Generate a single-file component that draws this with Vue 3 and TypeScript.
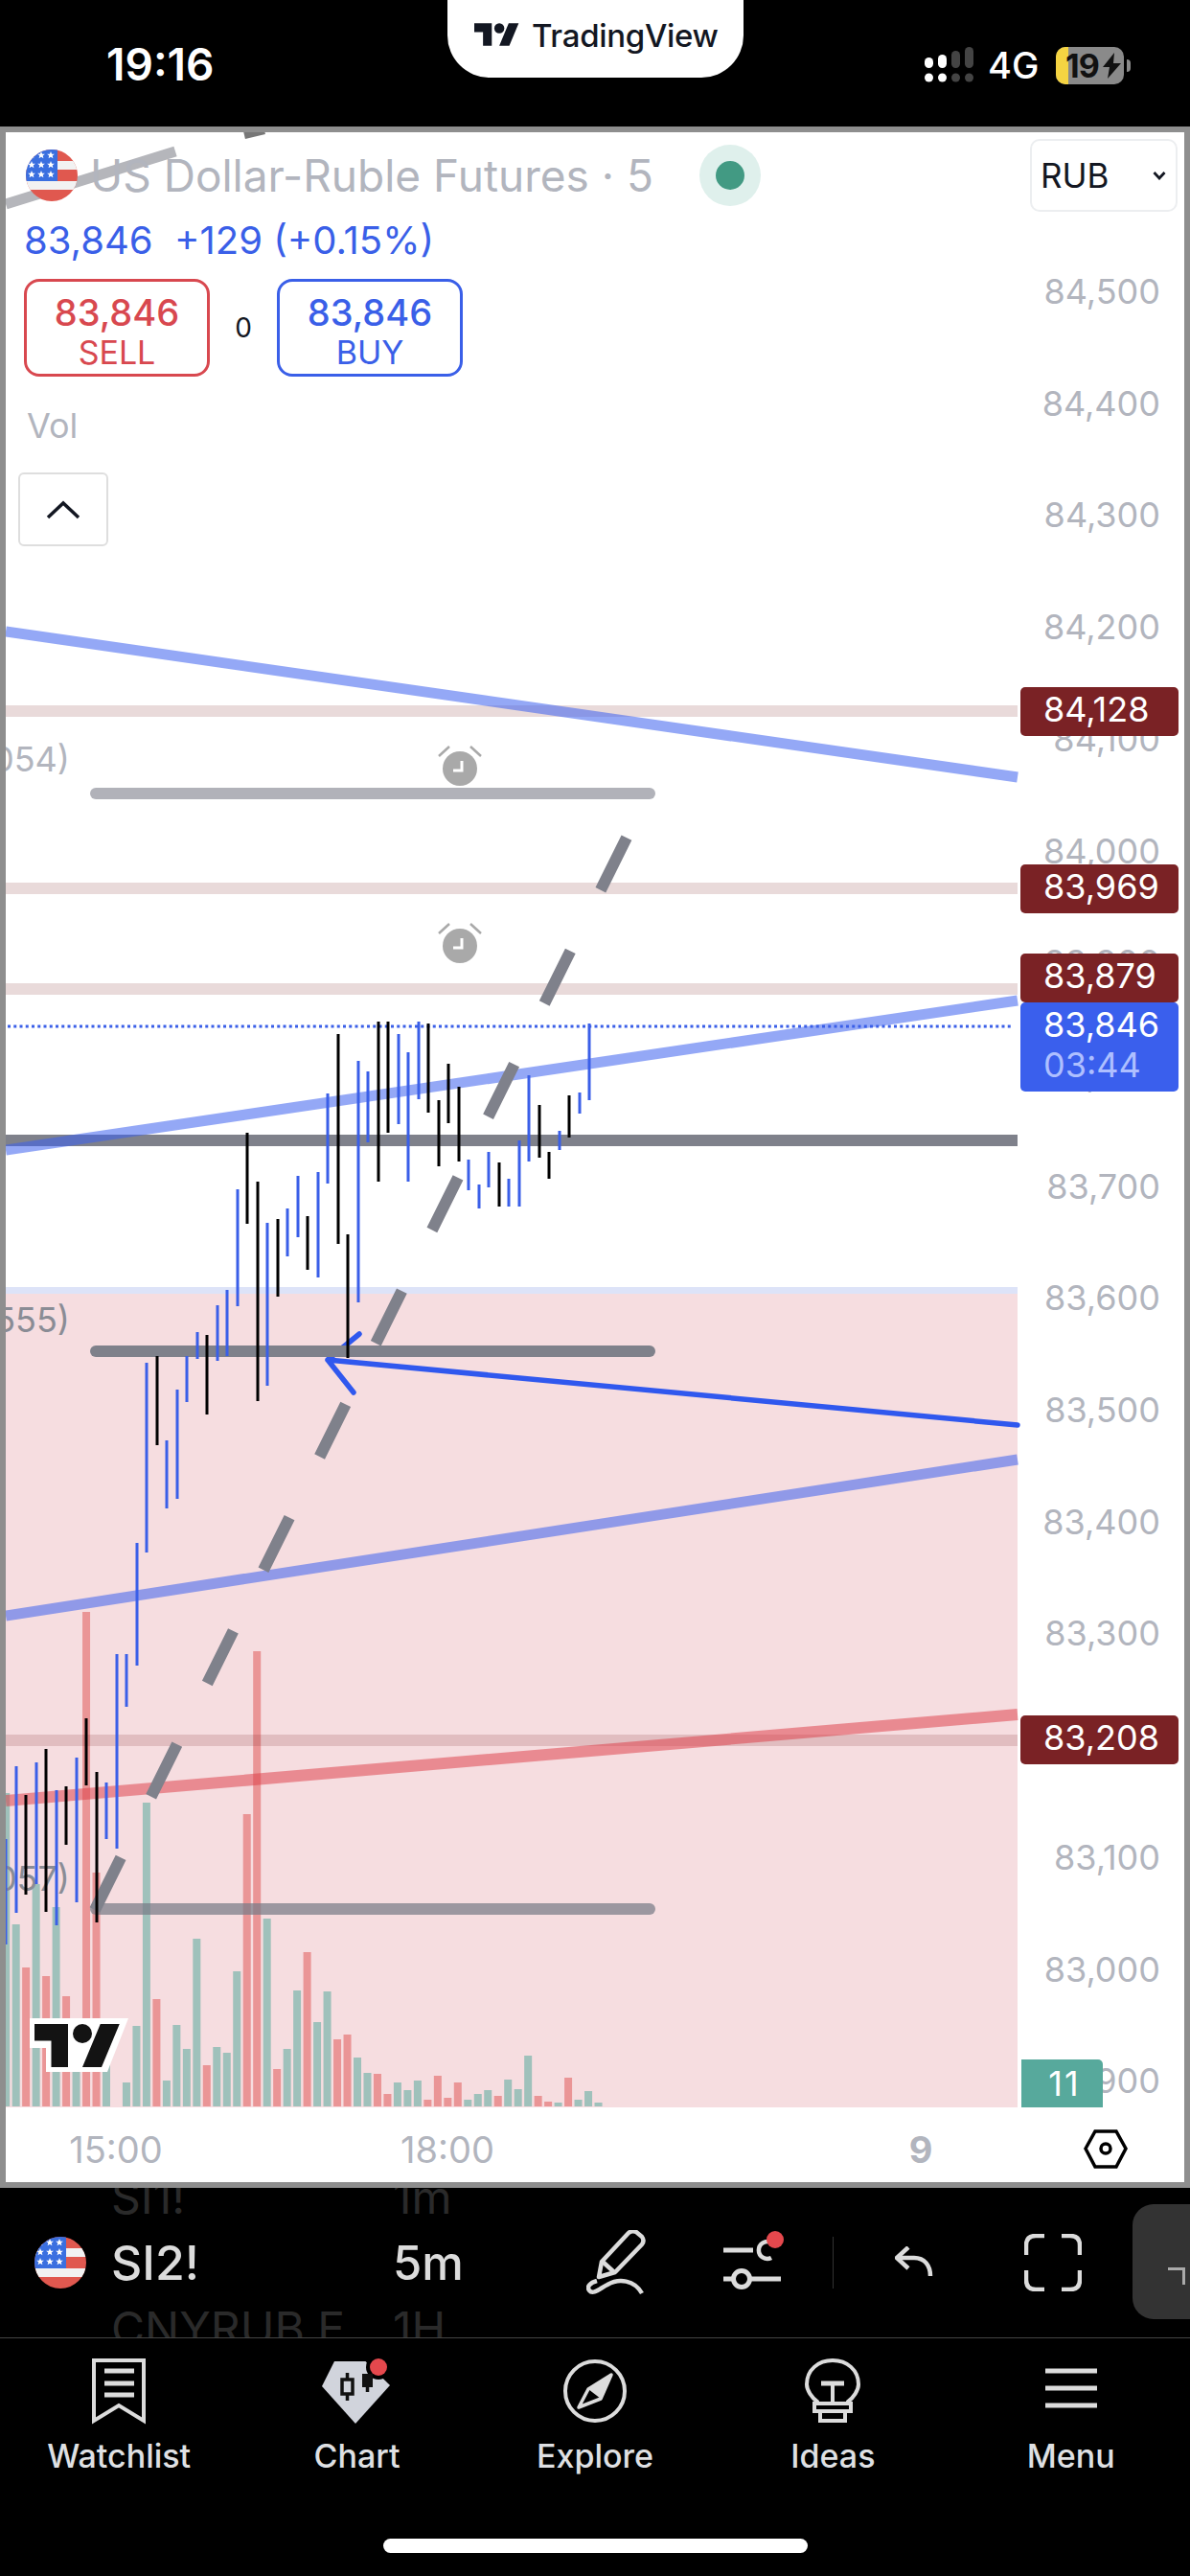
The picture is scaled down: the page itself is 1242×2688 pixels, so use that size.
<template>
  <div class="screen">
    <header class="status">
      <span class="clock">19:16</span>
      <div class="pill">
        <svg class="pill-logo" viewBox="0 0 36 18">
          <path d="M14 18H7V7H0V0h14v18zM28 18h-8l7.5-18h8L28 18z" fill="#131722" />
          <circle cx="20" cy="4" r="4" fill="#131722" />
        </svg>
        <span class="pill-text">TradingView</span>
      </div>
      <div class="status-right">
        <svg class="signal" width="52" height="40" viewBox="0 0 52 40">
          <rect x="0" y="12" width="9" height="11" rx="4.5" fill="#fff" />
          <rect x="14" y="9" width="9" height="14" rx="4.5" fill="#fff" />
          <rect x="28" y="5" width="9" height="18" rx="4.5" fill="#444" />
          <rect x="42" y="1" width="9" height="22" rx="4.5" fill="#444" />
          <circle cx="4.5" cy="33" r="4.5" fill="#fff" />
          <circle cx="18.5" cy="33" r="4.5" fill="#fff" />
          <circle cx="32.5" cy="33" r="4.5" fill="#444" />
          <circle cx="46.5" cy="33" r="4.5" fill="#444" />
        </svg>
        <span class="net">4G</span>
        <div class="battery">
          <div class="battery-fill"></div>
          <span class="battery-num">19</span>
          <svg class="bolt" width="21" height="27" viewBox="0 0 21 27">
            <path d="M13 0L1 15h7l-2 12L20 11h-8z" fill="#111" />
          </svg>
          <div class="battery-cap"></div>
        </div>
      </div>
    </header>

    <main class="chart">
      <svg class="plot" viewBox="6 138 1230 2139" width="1230" height="2139">
        <!-- price zone + volume -->
        <rect x="6" y="1343" width="1056" height="7" fill="#dde3f8" />
        <rect x="6" y="1350" width="1056" height="849" fill="#f6dde0" />
        <rect
          v-for="(v, i) in volumes"
          :key="'v' + i"
          :x="6.2 + i * 10.48 - 4"
          :y="v.top"
          width="8"
          :height="2198 - v.top"
          :fill="v.up ? '#57a99c' : '#e05a5a'"
          opacity="0.55"
        />

        <!-- horizontal alert levels -->
        <rect v-for="y in levelLines" :key="'l' + y" x="6" :y="y - 6" width="1056" height="12" fill="#7a2225" opacity="0.17" />

        <!-- arrow drawing goes under the grey lines -->
        <path d="M375 1392L342 1419L369 1453M342 1419L1062 1487" fill="none" stroke="#3058ee" stroke-width="5.5" stroke-linecap="round" stroke-linejoin="round" />

        <rect x="6" y="1184" width="1056" height="12" fill="#7f818b" />
        <rect x="94" y="822" width="590" height="12" rx="6" fill="#787b86" opacity="0.58" />
        <rect x="94" y="1404" width="590" height="12" rx="6" fill="#7f818b" />
        <rect x="94" y="1986" width="590" height="12" rx="6" fill="#787b86" opacity="0.72" />

        <!-- trend lines -->
        <g stroke-width="11" opacity="0.55">
          <line x1="6" y1="659" x2="1062" y2="811" stroke="#3d62f0" />
          <line x1="6" y1="1200" x2="1062" y2="1044" stroke="#3d62f0" />
          <line x1="6" y1="1686" x2="1062" y2="1523" stroke="#3d62f0" />
        </g>
        <line x1="6" y1="1879" x2="1062" y2="1789" stroke="#de3a44" stroke-width="12" opacity="0.5" />

        <line x1="99" y1="1993" x2="654" y2="874" stroke="#7f818b" stroke-width="12" stroke-dasharray="61 71" />
        <path d="M6 213L183 158" stroke="#b5b6bb" stroke-width="11" />
        <path d="M255 141L276 136" stroke="#777" stroke-width="8" />

        <g v-for="y in alertRows" :key="'a' + y" :transform="`translate(480 ${y})`">
          <circle r="18" fill="#a9a9a9" />
          <path d="M2 -8V2H-7" fill="none" stroke="#fff" stroke-width="3" />
          <path d="M-11 -23L-22 -13M11 -23L22 -13" stroke="#a9a9a9" stroke-width="2.5" />
        </g>

        <text class="ghost-label" x="73" y="792">054)</text>
        <text class="ghost-label dark" x="73" y="1377">555)</text>
        <text class="ghost-label dark" x="73" y="1960">057)</text>

        <line x1="8" y1="1071" x2="1058" y2="1071" stroke="#3a5fe8" stroke-width="3" stroke-dasharray="3 3.25" />

        <!-- bars -->
        <rect
          v-for="(c, i) in candles"
          :key="'c' + i"
          :x="Math.round(6 + i * 10.5) - 1.5"
          :y="c[0]"
          width="3"
          :height="c[1] - c[0]"
          :fill="c[2] === 'k' ? '#000' : '#3a5fe8'"
        />

        <!-- watermark -->
        <polygon points="31,2106 134,2106 112,2162 48,2162 48,2137 31,2137" fill="#fff" />
        <g transform="translate(36 2112) scale(2.5)">
          <path d="M14 18H7V7H0V0h14v18zM28 18h-8l7.5-18h8L28 18z" fill="#131313" />
          <circle cx="20" cy="4" r="4" fill="#131313" />
        </g>

        <!-- price axis -->
        <text v-for="(p, i) in axisPrices" :key="p" class="axis" x="1211" :y="304 + i * 116.7">{{ p }}</text>

        <g v-for="t in levelTags" :key="t.label">
          <rect x="1065" :y="t.top" width="165" height="51" rx="5" fill="#7a2225" />
          <text class="tag" x="1089" :y="t.top + 23">{{ t.label }}</text>
        </g>
        <rect x="1065" y="1046" width="165" height="93" rx="5" fill="#3a5fed" />
        <text class="tag" x="1089" y="1069">83,846</text>
        <text class="tag timer" x="1089" y="1111">03:44</text>
        <path d="M1066 2149h80a5 5 0 0 1 5 5v45h-85z" fill="#57a99c" />
        <text class="tag centered" x="1111" y="2174">11</text>

        <!-- time axis -->
        <text class="axis mid" x="121" y="2243">15:00</text>
        <text class="axis mid" x="467" y="2243">18:00</text>
        <text class="axis mid strong" x="961" y="2243">9</text>
        <path d="M1133 2242L1143 2224H1165L1175 2242L1165 2261H1143Z" fill="none" stroke="#000" stroke-width="3.5" />
        <circle cx="1154" cy="2242" r="5" fill="none" stroke="#000" stroke-width="3.5" />
      </svg>

      <div class="legend">
        <div class="legend-title">
          <svg class="flag" viewBox="0 0 54 54">
            <defs>
              <symbol id="us-flag" viewBox="0 0 54 54">
                <clipPath id="flag-clip"><circle cx="27" cy="27" r="27" /></clipPath>
                <g clip-path="url(#flag-clip)">
                  <rect width="54" height="54" fill="#e0584f" />
                  <rect y="12" width="54" height="9" fill="#f2f2f2" />
                  <rect y="33" width="54" height="9" fill="#f2f2f2" />
                  <rect width="33" height="33" fill="#3a6fe0" />
                  <polygon
                    v-for="s in flagStars"
                    :key="s.x + '-' + s.y"
                    points="0,-4 1.1,-1.3 3.9,-1.2 1.7,0.5 2.4,3.2 0,1.7 -2.4,3.2 -1.7,0.5 -3.9,-1.2 -1.1,-1.3"
                    :transform="`translate(${s.x} ${s.y})`"
                    fill="#fff"
                  />
                </g>
              </symbol>
            </defs>
            <use href="#us-flag" />
          </svg>
          <span class="symbol-name">US Dollar-Ruble Futures · 5</span>
          <span class="market-dot"><i></i></span>
        </div>
        <div class="quote">83,846&nbsp; +129 (+0.15%)</div>
        <div class="trade">
          <div class="trade-btn sell">
            <b>83,846</b>
            <span>SELL</span>
          </div>
          <span class="spread">0</span>
          <div class="trade-btn buy">
            <b>83,846</b>
            <span>BUY</span>
          </div>
        </div>
        <div class="vol">Vol</div>
        <div class="collapse">
          <svg width="36" height="20" viewBox="0 0 36 20">
            <path d="M2 18L18 3L34 18" fill="none" stroke="#131722" stroke-width="3.5" />
          </svg>
        </div>
      </div>

      <div class="currency">
        <span>RUB</span>
        <svg width="14" height="10" viewBox="0 0 14 10">
          <path d="M1.5 2L7 8L12.5 2" fill="none" stroke="#131722" stroke-width="2.8" />
        </svg>
      </div>
    </main>

    <section class="toolbar">
      <span class="behind top sym">SI1!</span>
      <span class="behind top res">1m</span>
      <span class="behind bottom sym">CNYRUB E</span>
      <span class="behind bottom res">1H</span>

      <svg class="flag bar-flag" viewBox="0 0 54 54"><use href="#us-flag" /></svg>
      <span class="bar-symbol">SI2!</span>
      <span class="bar-res">5m</span>

      <svg class="tool pen" width="62" height="68" viewBox="0 0 62 68" fill="none" stroke="#dcdcdc" stroke-width="4.5">
        <path d="M13 49L16 33L44 3Q48 0 52 2L58 7Q61 11 58 15L30 44Z" stroke-linejoin="round" />
        <path d="M17 33L29 44" />
        <path d="M11 53C4 55 0 59 3 63C7 68 14 61 22 57C34 50 50 52 58 66" />
      </svg>
      <svg class="tool sliders" width="66" height="64" viewBox="0 0 66 64" fill="none" stroke="#dcdcdc" stroke-width="5">
        <path d="M0 21H31" />
        <path d="M50 13A9 9 0 1 0 50 29" stroke-width="4.5" />
        <path d="M0 51H10M28 51H60" />
        <circle cx="19" cy="51" r="8.5" />
        <circle cx="54" cy="10" r="9" fill="#e5484d" stroke="none" />
      </svg>
      <i class="tool-sep"></i>
      <svg class="tool undo" width="40" height="32" viewBox="0 0 40 32" fill="none" stroke="#dcdcdc" stroke-width="4.5">
        <path d="M14 1L2 12L14 23" />
        <path d="M2 12H20C31 12 37 20 37 31" />
      </svg>
      <svg class="tool full" width="60" height="60" viewBox="0 0 60 60" fill="none" stroke="#dcdcdc" stroke-width="4.5">
        <path d="M21 2H12Q2 2 2 12V22M39 2H48Q58 2 58 12V22M21 58H12Q2 58 2 48V38M39 58H48Q58 58 58 48V38" />
      </svg>
      <div class="handle"><i></i></div>
    </section>

    <nav class="tabs">
      <div class="tab">
        <svg width="60" height="70" viewBox="0 0 60 70">
          <path d="M4 3H56V66L30 50L4 66Z" fill="none" stroke="#dcdcdc" stroke-width="4" />
          <path d="M15 14H46M15 27H46M15 39H46" stroke="#dcdcdc" stroke-width="5" />
        </svg>
        <span>Watchlist</span>
      </div>
      <div class="tab">
        <svg width="78" height="70" viewBox="0 0 78 70">
          <path d="M15 4H47.5L73 29L37 69L2 30Z" fill="#d1d4dc" />
          <circle cx="61" cy="10" r="13" fill="#000" />
          <circle cx="61" cy="10" r="9" fill="#e5484d" />
          <rect x="23" y="23" width="11" height="15" fill="#d1d4dc" stroke="#111" stroke-width="3.5" />
          <path d="M28.5 16V23M28.5 38V45" stroke="#111" stroke-width="3.5" />
          <rect x="44" y="17" width="11" height="14" fill="#111" />
          <path d="M49.5 31V36" stroke="#111" stroke-width="3.5" />
        </svg>
        <span>Chart</span>
      </div>
      <div class="tab">
        <svg width="70" height="70" viewBox="0 0 70 70">
          <circle cx="35" cy="35" r="31" fill="none" stroke="#dcdcdc" stroke-width="4" />
          <path d="M52 18L41 43L18 52L28 33Z" fill="none" stroke="#dcdcdc" stroke-width="3.5" stroke-linejoin="round" />
          <path d="M52 18L41 43L28 33Z" fill="#dcdcdc" />
        </svg>
        <span>Explore</span>
      </div>
      <div class="tab">
        <svg width="60" height="70" viewBox="0 0 60 70" fill="none" stroke="#dcdcdc" stroke-width="4">
          <path d="M15 47C8 42 3 34 3 28C3 13 15 3 30 3C45 3 57 13 57 28C57 34 52 42 45 47" />
          <path d="M11 48H49V56H11ZM17 56H43V66H17Z" />
          <path d="M18 27H42" stroke-width="5" />
          <path d="M30 27V47" />
        </svg>
        <span>Ideas</span>
      </div>
      <div class="tab">
        <svg width="54" height="70" viewBox="0 0 54 70">
          <path d="M0 14H54M0 32H54M0 50H54" stroke="#dcdcdc" stroke-width="5" />
        </svg>
        <span>Menu</span>
      </div>
    </nav>

    <div class="home-bar"></div>
  </div>
</template>

<script setup lang="ts">
type Candle = [number, number, 'b' | 'k']

const candles: Candle[] = [
  [1919, 2029, 'b'], [1843, 1996, 'b'], [1873, 1977, 'k'], [1839, 1966, 'b'], [1825, 1995, 'k'],
  [1868, 2009, 'b'], [1864, 1925, 'k'], [1834, 1985, 'b'], [1793, 1863, 'k'], [1849, 2006, 'k'],
  [1860, 1919, 'b'], [1726, 1929, 'b'], [1726, 1781, 'b'], [1610, 1738, 'b'], [1422, 1620, 'b'],
  [1415, 1508, 'k'], [1503, 1574, 'b'], [1450, 1564, 'b'], [1415, 1463, 'b'], [1390, 1418, 'b'],
  [1393, 1476, 'k'], [1362, 1420, 'b'], [1346, 1415, 'b'], [1241, 1363, 'b'], [1182, 1277, 'k'],
  [1233, 1462, 'k'], [1276, 1446, 'b'], [1272, 1353, 'k'], [1261, 1311, 'b'], [1227, 1291, 'b'],
  [1269, 1325, 'k'], [1223, 1333, 'b'], [1141, 1235, 'b'], [1079, 1298, 'k'], [1288, 1417, 'k'],
  [1107, 1359, 'b'], [1118, 1192, 'b'], [1066, 1233, 'k'], [1066, 1182, 'k'], [1079, 1173, 'b'],
  [1098, 1233, 'b'], [1066, 1147, 'b'], [1068, 1161, 'k'], [1148, 1217, 'k'], [1110, 1172, 'k'],
  [1134, 1212, 'k'], [1210, 1242, 'b'], [1236, 1261, 'b'], [1202, 1239, 'b'], [1213, 1259, 'k'],
  [1230, 1259, 'b'], [1190, 1259, 'b'], [1122, 1212, 'b'], [1153, 1208, 'k'], [1202, 1230, 'k'],
  [1180, 1200, 'b'], [1143, 1187, 'k'], [1140, 1162, 'b'], [1068, 1148, 'b']
]

// negative = falling bar (red), positive = rising bar (green)
const volumeTops = [
  1871, 2008, -2053, 1966, -2062, 1990, -2083, 2129, -1682, -1954, 2150, 2198, 2173, 2114, 1881,
  -2086, 2171, 2113, 2138, 2023, -2155, 2136, 2142, 2057, -1893, -1723, 2002, -2159, 2138, 2077,
  -2037, 2110, 2078, -2128, -2123, 2147, 2163, -2164, -2185, 2173, 2181, 2171, -2191, -2166, -2189,
  -2173, 2191, 2185, 2181, -2187, 2170, 2180, 2145, -2187, -2193, 2194, -2168, 2191, 2182, 2194
]
const volumes = volumeTops.map((v) => ({ top: Math.abs(v), up: v > 0 }))

const levelLines = [742, 927, 1032, 1816]
const alertRows = [802, 987]

const axisPrices = [
  '84,500', '84,400', '84,300', '84,200', '84,100', '84,000', '83,900', '83,800',
  '83,700', '83,600', '83,500', '83,400', '83,300', '83,200', '83,100', '83,000', '82,900'
]

const levelTags = [
  { label: '84,128', top: 717 },
  { label: '83,969', top: 902 },
  { label: '83,879', top: 995 },
  { label: '83,208', top: 1790 }
]

const flagStars = [6, 16, 26].flatMap((y) => [6, 16, 26].map((x) => ({ x, y })))
</script>

<style scoped>
.screen {
  position: relative;
  width: 1242px;
  height: 2688px;
  overflow: hidden;
  background: #000;
  font-family: Inter, "Liberation Sans", sans-serif;
}

.status {
  position: relative;
  display: flex;
  align-items: center;
  justify-content: space-between;
  height: 132px;
  padding: 0 70px 0 111px;
  box-sizing: border-box;
  color: #fff;
}

.clock {
  margin-top: -1px;
  font-size: 46px;
  font-weight: 600;
  transform: translateY(1px);
}

.pill {
  position: absolute;
  top: 0;
  left: 467px;
  display: flex;
  gap: 13px;
  width: 309px;
  height: 81px;
  padding: 24px 0 0 28px;
  box-sizing: border-box;
  background: #fff;
  border-radius: 0 0 44px 44px;
  color: #131722;
}

.pill-logo {
  width: 47px;
  height: 24px;
}

.pill-text {
  font-size: 33px;
  font-weight: 500;
  line-height: 27px;
  letter-spacing: -0.3px;
}

.status-right {
  display: flex;
  align-items: center;
  margin-top: 4px;
  margin-right: -1px;
}

.signal {
  margin-right: 14px;
}

.net {
  width: 71px;
  font-size: 38px;
  font-weight: 500;
}

.battery {
  position: relative;
  display: flex;
  align-items: center;
  width: 71px;
  height: 39px;
  background: #8a8a8a;
  border-radius: 10px;
}

.battery-fill {
  position: absolute;
  top: 0;
  bottom: 0;
  left: 0;
  width: 13px;
  background: #f5d442;
  border-radius: 10px 0 0 10px;
}

.battery-num {
  position: relative;
  margin-left: 10px;
  font-size: 34px;
  font-weight: 700;
  color: #111;
  letter-spacing: -1px;
}

.bolt {
  position: relative;
  margin-left: 3px;
}

.battery-cap {
  position: absolute;
  top: 13px;
  right: -7px;
  width: 4px;
  height: 13px;
  background: #8a8a8a;
  border-radius: 0 4px 4px 0;
}

.chart {
  position: relative;
  width: 1230px;
  height: 2139px;
  background: #fff;
  border: 6px solid #8e8e8e;
}

.plot {
  display: block;
}

.plot text {
  font-family: Inter, "Liberation Sans", sans-serif;
  dominant-baseline: central;
}

.axis {
  font-size: 36px;
  fill: #b2b5be;
  text-anchor: end;
}

.axis.mid {
  font-size: 38px;
  text-anchor: middle;
}

.axis.strong {
  font-weight: 700;
}

.tag {
  font-size: 36px;
  fill: #fff;
}

.tag.timer {
  fill: #aebfff;
}

.tag.centered {
  text-anchor: middle;
  letter-spacing: 2px;
}

.ghost-label {
  font-size: 36px;
  fill: #b2b5be;
  text-anchor: end;
}

.ghost-label.dark {
  fill: #8a8c95;
}

.legend {
  position: absolute;
  top: 18px;
  left: 19px;
  display: flex;
  flex-direction: column;
}

.legend-title {
  display: flex;
  align-items: center;
  height: 54px;
  margin-left: 2px;
}

.flag {
  width: 54px;
  height: 54px;
  flex-shrink: 0;
}

.symbol-name {
  margin-left: 13px;
  font-size: 46px;
  color: #b2b5be;
  white-space: nowrap;
}

.market-dot {
  display: flex;
  align-items: center;
  justify-content: center;
  width: 64px;
  height: 64px;
  margin-left: 48px;
  background: #dff0ec;
  border-radius: 50%;
}

.market-dot i {
  width: 30px;
  height: 30px;
  background: #429a83;
  border-radius: 50%;
}

.quote {
  height: 44px;
  margin-top: 19px;
  font-size: 40px;
  line-height: 44px;
  color: #3a5fe8;
  white-space: nowrap;
}

.trade {
  display: flex;
  align-items: center;
  margin-top: 18px;
}

.trade-btn {
  display: flex;
  flex-direction: column;
  align-items: center;
  width: 194px;
  height: 102px;
  padding-top: 10px;
  box-sizing: border-box;
  border: 3px solid currentColor;
  border-radius: 16px;
}

.trade-btn b {
  font-size: 38px;
  font-weight: 500;
  line-height: 44px;
}

.trade-btn span {
  font-size: 34px;
  line-height: 40px;
}

.sell {
  color: #d8484f;
}

.buy {
  color: #3a5fe8;
}

.spread {
  width: 70px;
  font-size: 28px;
  text-align: center;
  color: #131722;
}

.vol {
  height: 40px;
  margin: 31px 0 0 3px;
  font-size: 36px;
  line-height: 40px;
  color: #b2b5be;
}

.collapse {
  display: flex;
  align-items: center;
  justify-content: center;
  width: 94px;
  height: 77px;
  margin: 29px 0 0 -6px;
  box-sizing: border-box;
  border: 2px solid #dedede;
  border-radius: 6px;
}

.currency {
  position: absolute;
  top: 7px;
  right: 7px;
  display: flex;
  align-items: center;
  justify-content: space-between;
  width: 154px;
  height: 76px;
  padding: 0 10px 0 9px;
  box-sizing: border-box;
  background: #fff;
  border: 2px solid #eceef0;
  border-radius: 10px;
  font-size: 35px;
  color: #131722;
}

.toolbar {
  position: relative;
  display: flex;
  align-items: center;
  height: 156px;
  overflow: hidden;
  color: #dcdcdc;
}

.behind {
  position: absolute;
  font-size: 48px;
  line-height: 50px;
  color: #2a2a2a;
  white-space: nowrap;
}

.behind.top {
  top: -15px;
}

.behind.bottom {
  top: 122px;
}

.behind.sym {
  left: 116px;
}

.behind.res {
  left: 410px;
}

.bar-flag {
  position: relative;
  margin-left: 36px;
}

.bar-symbol {
  width: 294px;
  margin-left: 26px;
  font-size: 50px;
  font-weight: 500;
}

.bar-res {
  width: 202px;
  font-size: 49px;
  font-weight: 500;
}

.tool {
  flex-shrink: 0;
}

.sliders {
  margin-left: 81px;
  margin-top: -4px;
}

.tool-sep {
  width: 1px;
  height: 54px;
  margin: 0 0 0 48px;
  background: #333;
}

.undo {
  margin-left: 64px;
  margin-top: -2px;
}

.full {
  margin-left: 95px;
}

.handle {
  position: absolute;
  top: 17px;
  right: 0;
  width: 60px;
  height: 120px;
  background: #333;
  border-radius: 22px 0 0 22px;
}

.handle i {
  position: absolute;
  top: 66px;
  right: 5px;
  width: 18px;
  height: 18px;
  box-sizing: border-box;
  border-top: 3px solid #aaa;
  border-right: 3px solid #aaa;
}

.tabs {
  display: grid;
  grid-template-columns: repeat(5, 1fr);
  padding-top: 20px;
  border-top: 1px solid #444;
}

.tab {
  display: flex;
  flex-direction: column;
  align-items: center;
  color: #dfe0e3;
}

.tab svg {
  display: block;
}

.tab span {
  margin-top: 14px;
  font-size: 34px;
  font-weight: 500;
  line-height: 38px;
}

.home-bar {
  width: 443px;
  height: 15px;
  margin: 67px auto 0;
  background: #fff;
  border-radius: 8px;
}
</style>

<style>
html,
body {
  margin: 0;
  background: #000;
}
</style>
